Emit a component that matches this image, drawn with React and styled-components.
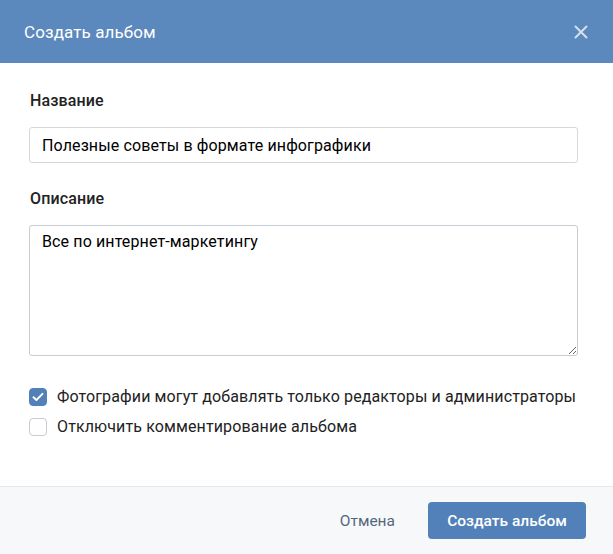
import { useState } from 'react';
import styled, { createGlobalStyle } from 'styled-components';

const GlobalStyle = createGlobalStyle`
	html, body {
		margin: 0;
		padding: 0;
		background: #ffffff;
	}
	body {
		font-family: Roboto, 'Open Sans', Arial, sans-serif;
		-webkit-font-smoothing: antialiased;
	}
`;

const CheckIcon = () => (
	<svg width='12' height='10' viewBox='0 0 12 10' fill='none'>
		<path
			d='M1.5 5.2 L4.4 8 L10.5 1.8'
			stroke='#ffffff'
			strokeWidth='1.9'
			strokeLinecap='round'
			strokeLinejoin='round'
		/>
	</svg>
);

const CloseIcon = () => (
	<svg width='14' height='14' viewBox='0 0 14 14' fill='none'>
		<path
			d='M1.5 1.5 L12.5 12.5 M12.5 1.5 L1.5 12.5'
			stroke='#ffffff'
			strokeOpacity='0.75'
			strokeWidth='2'
			strokeLinecap='round'
		/>
	</svg>
);

const Checkbox = ({ checked, onToggle, children }) => (
	<CheckRow onClick={onToggle}>
		<Box $checked={checked}>{checked && <CheckIcon />}</Box>
		<span>{children}</span>
	</CheckRow>
);

const App = () => {
	const [editorsOnly, setEditorsOnly] = useState(true);
	const [noComments, setNoComments] = useState(false);

	return (
		<>
			<GlobalStyle />
			<Modal>
				<Header>
					<h2>Создать альбом</h2>
					<CloseButton aria-label='Закрыть'>
						<CloseIcon />
					</CloseButton>
				</Header>
				<Body>
					<Field>
						<Label>Название</Label>
						<TextInput defaultValue='Полезные советы в формате инфографики' />
					</Field>
					<Field>
						<Label>Описание</Label>
						<TextArea defaultValue='Все по интернет-маркетингу' />
					</Field>
					<Options>
						<Checkbox
							checked={editorsOnly}
							onToggle={() => setEditorsOnly(!editorsOnly)}
						>
							Фотографии могут добавлять только редакторы и администраторы
						</Checkbox>
						<Checkbox
							checked={noComments}
							onToggle={() => setNoComments(!noComments)}
						>
							Отключить комментирование альбома
						</Checkbox>
					</Options>
				</Body>
				<Footer>
					<TextButton>Отмена</TextButton>
					<PrimaryButton>Создать альбом</PrimaryButton>
				</Footer>
			</Modal>
		</>
	);
};

const Modal = styled.div`
	width: 613px;
	height: 554px;
	display: flex;
	flex-direction: column;
	background: #ffffff;
	overflow: hidden;
`;

const Header = styled.header`
	height: 63px;
	flex-shrink: 0;
	display: flex;
	align-items: center;
	justify-content: space-between;
	padding: 0 25px 0 24px;
	background-color: #5b88bd;
	box-sizing: border-box;
	h2 {
		margin: 0;
		font-size: 17px;
		font-weight: 400;
		color: #ffffff;
		letter-spacing: 0.1px;
	}
`;

const CloseButton = styled.button`
	display: flex;
	align-items: center;
	justify-content: center;
	padding: 0;
	border: none;
	background: none;
	cursor: pointer;
`;

const Body = styled.div`
	flex: 1;
	display: flex;
	flex-direction: column;
	padding: 28px 35px 0 29px;
	letter-spacing: 0.12px;
`;

const Field = styled.div`
	display: flex;
	flex-direction: column;
	margin-bottom: 26px;
`;

const Label = styled.label`
	font-size: 16px;
	font-weight: 500;
	color: #222222;
	margin-left: 1px;
	margin-bottom: 16px;
	line-height: 20px;
`;

const inputBase = `
	box-sizing: border-box;
	width: 549px;
	border: 1px solid #d3d9de;
	border-radius: 3px;
	font-family: Roboto, 'Open Sans', Arial, sans-serif;
	font-size: 16px;
	letter-spacing: 0.12px;
	color: #000000;
	background: #ffffff;
	outline: none;
	&:focus {
		border-color: #a6b7c9;
	}
`;

const TextInput = styled.input`
	${inputBase}
	height: 36px;
	padding: 0 12px;
`;

const TextArea = styled.textarea`
	${inputBase}
	height: 131px;
	padding: 6px 12px;
	line-height: 20px;
	resize: vertical;
	border-color: #c5ccd3;
`;

const Options = styled.div`
	display: flex;
	flex-direction: column;
	gap: 10px;
	margin-top: 5px;
`;

const CheckRow = styled.div`
	display: flex;
	align-items: center;
	gap: 10px;
	font-size: 16px;
	color: #222222;
	cursor: pointer;
	user-select: none;
	line-height: 20px;
`;

const Box = styled.span`
	width: 18px;
	height: 18px;
	flex-shrink: 0;
	box-sizing: border-box;
	display: flex;
	align-items: center;
	justify-content: center;
	border-radius: 4px;
	border: 1px solid ${({ $checked }) => ($checked ? '#5181b8' : '#c5ccd3')};
	background: ${({ $checked }) => ($checked ? '#5181b8' : '#ffffff')};
`;

const Footer = styled.footer`
	height: 67px;
	flex-shrink: 0;
	display: flex;
	align-items: center;
	justify-content: flex-end;
	gap: 16px;
	padding: 0 27px 0 0;
	background: #f7f8fa;
	border-top: 1px solid #e7e8ec;
`;

const TextButton = styled.button`
	padding: 0 17px;
	height: 37px;
	border: none;
	background: none;
	font-family: inherit;
	font-size: 15.5px;
	color: #55677d;
	cursor: pointer;
	&:hover {
		text-decoration: underline;
	}
`;

const PrimaryButton = styled.button`
	height: 37px;
	padding: 0 19px;
	min-width: 158px;
	border: none;
	border-radius: 4px;
	background: #5181b8;
	font-family: inherit;
	font-size: 15.5px;
	font-weight: 500;
	color: #ffffff;
	cursor: pointer;
	&:hover {
		background: #5b88bd;
	}
`;

export default App;
